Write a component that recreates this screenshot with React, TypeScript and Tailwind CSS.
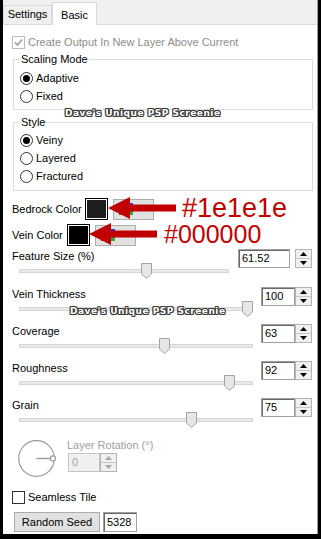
import React from "react";

const SANS = "font-['Liberation_Sans',Arial,sans-serif]";

function Check({ checked, disabled, label }: { checked?: boolean; disabled?: boolean; label: string }) {
  return (
    <div className="flex h-[13px] items-center">
      <div
        className={`flex h-[13px] w-[13px] items-center justify-center border bg-white ${
          disabled ? "border-[#bcbcbc]" : "border-[#333333]"
        }`}
      >
        {checked && (
          <svg width="9" height="9" viewBox="0 0 9 9">
            <path d="M1 4.5L3.5 7L8 1.5" fill="none" stroke={disabled ? "#a0a0a0" : "#000"} strokeWidth="1.8" />
          </svg>
        )}
      </div>
      <span className={`ml-[3px] leading-[13px] ${disabled ? "text-[#8d8d8d]" : ""}`}>{label}</span>
    </div>
  );
}

function Radio({ checked, label }: { checked?: boolean; label: string }) {
  return (
    <div className="flex h-[18px] items-center pl-[6px]">
      <div className="flex h-[13px] w-[13px] items-center justify-center rounded-full border border-[#333333] bg-white">
        {checked && <div className="h-[7px] w-[7px] rounded-full bg-black" />}
      </div>
      <span className="ml-[3px] leading-[13px]">{label}</span>
    </div>
  );
}

function Spinner({ disabled }: { disabled?: boolean }) {
  const c = disabled ? "#a8a8a8" : "#000";
  return (
    <div className="flex h-[19px] w-[17px] flex-col border border-[#b4b4b4] bg-[#f0f0f0]">
      <div className="flex flex-1 items-center justify-center border-b border-[#c8c8c8]">
        <svg width="7" height="4" viewBox="0 0 7 4">
          <path d="M3.5 0L7 4H0Z" fill={c} />
        </svg>
      </div>
      <div className="flex flex-1 items-center justify-center">
        <svg width="7" height="4" viewBox="0 0 7 4">
          <path d="M0 0H7L3.5 4Z" fill={c} />
        </svg>
      </div>
    </div>
  );
}

function NumBox({ value, w, disabled }: { value: string; w: number; disabled?: boolean }) {
  return (
    <div
      className={`flex h-[19px] items-center border pl-[3px] leading-[13px] ${
        disabled
          ? "border-[#c4c4c4] bg-[#f0f0f0] text-[#a0a0a0]"
          : "border-[#a0a0a0] bg-white shadow-[inset_1px_1px_0_#696969]"
      }`}
      style={{ width: w }}
    >
      {value}
    </div>
  );
}

function Slider({ value }: { value: number }) {
  return (
    <div className="relative ml-[7px] h-[16px]">
      <div className="h-[6px]" />
      <div className="h-[4px] border border-[#d6d6d6] bg-[#e7eaea]" />
      <svg
        className="absolute top-0"
        style={{ left: `calc(${value / 100} * (100% - 11px))` }}
        width="11"
        height="16"
        viewBox="0 0 11 16"
      >
        <path d="M0.5 0.5H10.5V11L5.5 15.5L0.5 11Z" fill="#e6e6e6" stroke="#a3a3a3" />
      </svg>
    </div>
  );
}

function SliderRow({ label, value, text, wide }: { label: string; value: number; text: string; wide?: boolean }) {
  return (
    <div className="flex h-[37px] w-[300px] items-start">
      <div className={`flex-1 ${wide ? "mr-[9px]" : "mr-[8px]"}`}>
        <div className="h-[14px] leading-[14px]">{label}</div>
        <Slider value={value} />
      </div>
      <NumBox value={text} w={wide ? 52 : 34} />
      <div className={wide ? "ml-[5px]" : "ml-[0px]"}>
        <Spinner />
      </div>
    </div>
  );
}

function Swatch({ color }: { color: string }) {
  return (
    <div className="h-[22px] w-[23px] border border-black bg-white p-[1px]">
      <div className="h-full w-full" style={{ backgroundColor: color }} />
    </div>
  );
}

function PickButton() {
  return (
    <div className="ml-[5px] flex h-[21px] w-[41px] items-center border border-[#adadad] bg-[#e1e1e1] pl-[4px]">
      <svg width="16" height="14" viewBox="0 0 16 14">
        <rect x="1" y="1" width="14" height="5" fill="#2b3de0" />
        <rect x="1" y="6" width="6" height="7" fill="#d42020" />
        <rect x="8" y="6" width="7" height="7" fill="#3aa53a" />
      </svg>
    </div>
  );
}

function Arrow({ w }: { w: number }) {
  return (
    <svg width={w} height="22" viewBox={`0 0 ${w} 22`}>
      <path d={`M0 11L22 0V7.5H${w}V14.5H22V22Z`} fill="#c00000" />
    </svg>
  );
}

function Watermark({ className }: { className: string }) {
  return (
    <div
      className={`pointer-events-none absolute font-['DejaVu_Sans',sans-serif] text-[9px] leading-[9px] font-bold tracking-[0.5px] whitespace-nowrap text-white [text-shadow:1px_0_0_#3a3a3a,-1px_0_0_#3a3a3a,0_1px_0_#3a3a3a,0_-1px_0_#3a3a3a,1px_1px_0_#3a3a3a,-1px_-1px_0_#3a3a3a,1px_-1px_0_#3a3a3a,-1px_1px_0_#3a3a3a] ${className}`}
    >
      Dave's Unique PSP Screenie
    </div>
  );
}

export default function App() {
  return (
    <div className={`h-[539px] w-[321px] bg-black pr-[3px] pb-[5px] pl-[3px] text-[11px] text-black ${SANS}`}>
      <div className="relative flex h-full flex-col border-r border-[#a0a0a0] bg-[#f0f0f0]">
        {/* tabs */}
        <div className="flex h-[24px] items-end">
          <div className="mb-[1px] flex h-[18px] w-[49px] items-center justify-center border border-b-0 border-[#d9d9d9] bg-[#f0f0f0]">
            Settings
          </div>
          <div className="relative z-10 -mb-[1px] flex h-[23px] w-[45px] items-start justify-center border border-b-0 border-[#d9d9d9] bg-white pt-[4px]">
            Basic
          </div>
        </div>

        {/* panel */}
        <div className="relative flex-1 border-t border-[#d9d9d9] bg-white pl-[9px]">
          <div className="mt-[11px]">
            <Check checked disabled label="Create Output In New Layer Above Current" />
          </div>

          <fieldset className="mt-[4px] ml-[1px] w-[300px] border border-[#dcdcdc] pb-[4px]">
            <legend className="ml-[6px] px-[1px] leading-[13px]">Scaling Mode</legend>
            <div className="mt-[3px]">
              <Radio checked label="Adaptive" />
              <Radio label="Fixed" />
            </div>
          </fieldset>

          <fieldset className="mt-[6px] ml-[1px] w-[300px] border border-[#dcdcdc] pb-[5px]">
            <legend className="ml-[6px] px-[1px] leading-[13px]">Style</legend>
            <div className="mt-[2px]">
              <Radio checked label="Veiny" />
              <Radio label="Layered" />
              <Radio label="Fractured" />
            </div>
          </fieldset>

          <div className="mt-[7px] flex items-center">
            <div className="w-[73px]">Bedrock Color</div>
            <Swatch color="#1e1e1e" />
            <PickButton />
          </div>
          <div className="mt-[4px] flex items-center">
            <div className="w-[55px]">Vein Color</div>
            <Swatch color="#000000" />
            <PickButton />
          </div>

          <div className="mt-[3px]">
            <div className="mb-[1px]">
              <SliderRow label="Feature Size (%)" value={61.52} text="61.52" wide />
            </div>
            <SliderRow label="Vein Thickness" value={100} text="100" />
            <SliderRow label="Coverage" value={63} text="63" />
            <SliderRow label="Roughness" value={92} text="92" />
            <SliderRow label="Grain" value={75} text="75" />
          </div>

          <div className="mt-[5px] flex items-start">
            <svg className="ml-[6px]" width="38" height="37" viewBox="0 0 38 37">
              <circle cx="18.5" cy="18.5" r="17.8" fill="none" stroke="#9a9a9a" strokeWidth="1.2" />
              <line x1="18.5" y1="18.5" x2="33" y2="18.5" stroke="#9a9a9a" strokeWidth="1.4" />
              <circle cx="35" cy="18.5" r="2.6" fill="white" stroke="#9a9a9a" strokeWidth="1.2" />
            </svg>
            <div className="ml-[11px] -mt-[2px]">
              <div className="h-[15px] leading-[15px] text-[#a0a0a0]">Layer Rotation (°)</div>
              <div className="ml-[1px] flex">
                <NumBox value="0" w={32} disabled />
                <Spinner disabled />
              </div>
            </div>
          </div>

          <div className="mt-[14px]">
            <Check label="Seamless Tile" />
          </div>

          <div className="mt-[8px] flex items-center">
            <div className="ml-[2px] flex h-[20px] w-[86px] items-center justify-center border border-[#adadad] bg-[#e1e1e1]">
              Random Seed
            </div>
            <div className="ml-[3px] flex h-[20px] w-[34px] items-center border border-[#a0a0a0] bg-white pl-[3px] shadow-[inset_1px_1px_0_#696969]">
              5328
            </div>
          </div>

          {/* annotations */}
          <Watermark className="top-[84px] left-[62px]" />
          <Watermark className="top-[282px] left-[67px]" />
          <div className="pointer-events-none absolute top-[172px] left-[105px]">
            <Arrow w={68} />
          </div>
          <div className="pointer-events-none absolute top-[198px] left-[86px]">
            <Arrow w={68} />
          </div>
          <div className="pointer-events-none absolute top-[170px] left-[179px] text-[27px] leading-[27px] text-[#c00000]">
            #1e1e1e
          </div>
          <div className="pointer-events-none absolute top-[197px] left-[161px] text-[25px] leading-[25px] text-[#c00000]">
            #000000
          </div>
        </div>
      </div>
    </div>
  );
}
